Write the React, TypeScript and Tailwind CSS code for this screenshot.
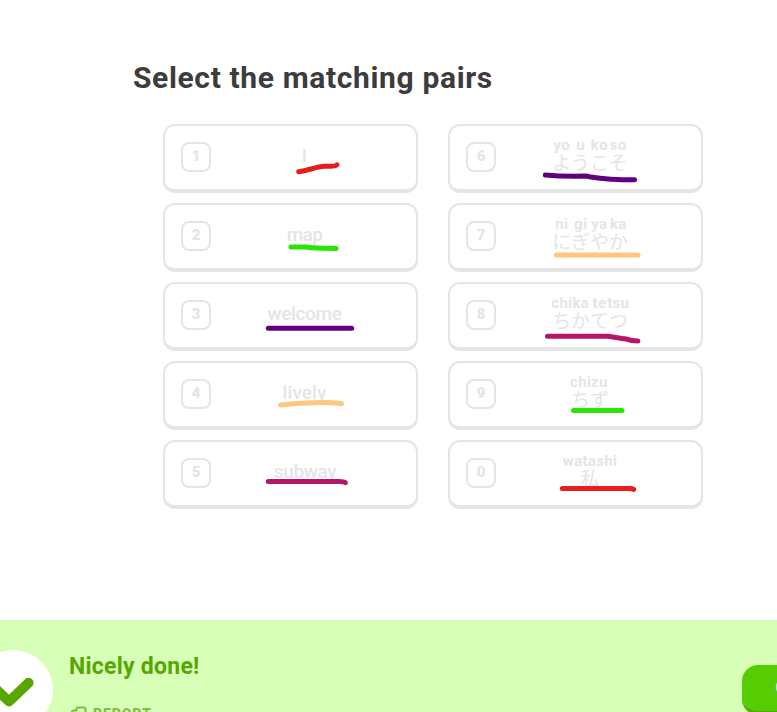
type Word = { n: string; text: string; style: string };
type Kana = { n: string; pairs: [string, string][] };

const words: Word[] = [
  { n: "1", text: "I", style: "pr-[2px]" },
  { n: "2", text: "map", style: "tracking-[-0.6px] pr-[2px]" },
  { n: "3", text: "welcome", style: "tracking-[-0.35px] pr-[2px]" },
  { n: "4", text: "lively", style: "tracking-[0.1px] pr-[2px]" },
  { n: "5", text: "subway", style: "tracking-[-0.35px] pr-px" },
];

const kana: Kana[] = [
  { n: "6", pairs: [["yo", "よ"], ["u", "う"], ["ko", "こ"], ["so", "そ"]] },
  { n: "7", pairs: [["ni", "に"], ["gi", "ぎ"], ["ya", "や"], ["ka", "か"]] },
  { n: "8", pairs: [["chi", "ち"], ["ka", "か"], ["te", "て"], ["tsu", "つ"]] },
  { n: "9", pairs: [["chi", "ち"], ["zu", "ず"]] },
  { n: "0", pairs: [["watashi", "私"]] },
];

const strokes = [
  { c: "#e81e1e", d: "M298.7 171.7C309 170.5 315 166.8 325 166.3C330 166 335 167.3 337 164.8" },
  { c: "#28e600", d: "M291 247H305C311 248 318 248.4 336 248.4" },
  { c: "#5f0080", d: "M268.3 328.3H351.7" },
  { c: "#ffc680", d: "M280.5 405C300 402.6 328 401.6 341.5 403.7" },
  { c: "#b81469", d: "M268.3 481.5H339Q344 481.5 345.4 482.6" },
  { c: "#5f0080", d: "M545.3 175C558 176.2 572 176.4 585 176.1C596 177.6 604 179.8 634.5 179.8" },
  { c: "#ffc680", d: "M556.5 255H638" },
  { c: "#b81469", d: "M547.5 336.2H608C616 337.4 621 338.4 626 338.9Q631 341 637.8 341" },
  { c: "#28e600", d: "M573.5 410.4H622" },
  { c: "#e81e1e", d: "M562.3 488.4H629Q632 488.3 633.6 489.4" },
];

function Card({ n, children }: { n: string; children: React.ReactNode }) {
  return (
    <div className="flex h-[69px] items-center rounded-xl border-2 border-b-4 border-[#e5e5e5] bg-white px-4">
      <div className="mb-[2px] flex size-[30px] shrink-0 items-center justify-center rounded-lg border-2 border-[#e5e5e5] text-[15px] leading-none font-black">
        {n}
      </div>
      <div className="flex flex-1 items-center justify-center">{children}</div>
    </div>
  );
}

export default function App() {
  return (
    <div className="flex h-[712px] w-[777px] flex-col overflow-hidden bg-white font-['Roboto','Noto_Sans_CJK_JP',sans-serif]">
      <main className="h-[620px] shrink-0 pt-[59px] pl-[133px]">
        <h1 className="h-[65px] text-[30px] leading-[38px] font-bold tracking-[0.64px] whitespace-nowrap text-[#3c3c3c]">
          Select the matching pairs
        </h1>
        <div className="relative ml-[30px] flex w-[540px] gap-[30px] text-[#e5e5e5]">
          <div className="flex w-[255px] flex-col gap-[10px]">
            {words.map((w) => (
              <Card key={w.n} n={w.n}>
                <span className={`pb-[4px] text-[19px] leading-6 font-medium ${w.style}`}>{w.text}</span>
              </Card>
            ))}
          </div>
          <div className="flex w-[255px] flex-col gap-[10px]">
            {kana.map((k) => (
              <Card key={k.n} n={k.n}>
                <div className="flex pr-px pb-[7px]">
                  {k.pairs.map(([r, c], i) => (
                    <div key={i} className="flex w-[18.8px] flex-col items-center whitespace-nowrap">
                      <span className="text-[15px] leading-[18px] font-bold tracking-[0.3px]">{r}</span>
                      <span className="text-[19px] leading-[19px]">{c}</span>
                    </div>
                  ))}
                </div>
              </Card>
            ))}
          </div>
          <svg className="absolute inset-0 h-[385px] w-[540px]" viewBox="163 124 540 385" fill="none" strokeWidth="5" strokeLinecap="round" strokeLinejoin="round">
            {strokes.map((s) => (
              <path key={s.d} d={s.d} stroke={s.c} />
            ))}
          </svg>
        </div>
      </main>
      <footer className="flex h-[92px] shrink-0 items-start justify-between bg-[#d7ffb8] text-[#58a700]">
        <div className="flex">
          <div className="mt-[30px] -ml-[27px] flex size-20 shrink-0 items-center justify-center rounded-full bg-white">
            <svg className="size-20" viewBox="0 0 80 80" fill="none" stroke="#58a700" strokeWidth="10" strokeLinecap="round" strokeLinejoin="round">
              <path d="M24.5 40.5L36 51.5L55.5 32.8" />
            </svg>
          </div>
          <div className="ml-4 pt-[31px]">
            <h2 className="text-[23px] leading-8 font-bold tracking-[0.25px] whitespace-nowrap">Nicely done!</h2>
            <div className="mt-[21px] flex items-start text-[#58a700]/70">
              <svg className="mt-[2px] ml-px h-5 w-[18px]" viewBox="0 0 18 20" fill="none" stroke="currentColor" strokeWidth="2" strokeLinejoin="round">
                <path d="M2 18V6Q2 4.5 3.5 4.5H6.5V3Q6.5 1.5 8 1.5H14Q15.5 1.5 15.5 3V12H7" />
              </svg>
              <span className="ml-[5px] text-[14px] leading-[20px] font-black tracking-[0.9px]">REPORT</span>
            </div>
          </div>
        </div>
        <button className="mt-[45px] -mr-[115px] h-[50px] w-[150px] shrink-0 rounded-2xl border-b-4 border-[#58a700] bg-[#58cc02] text-[16px] font-bold tracking-[0.6px] text-white">
          CONTINUE
        </button>
      </footer>
    </div>
  );
}
